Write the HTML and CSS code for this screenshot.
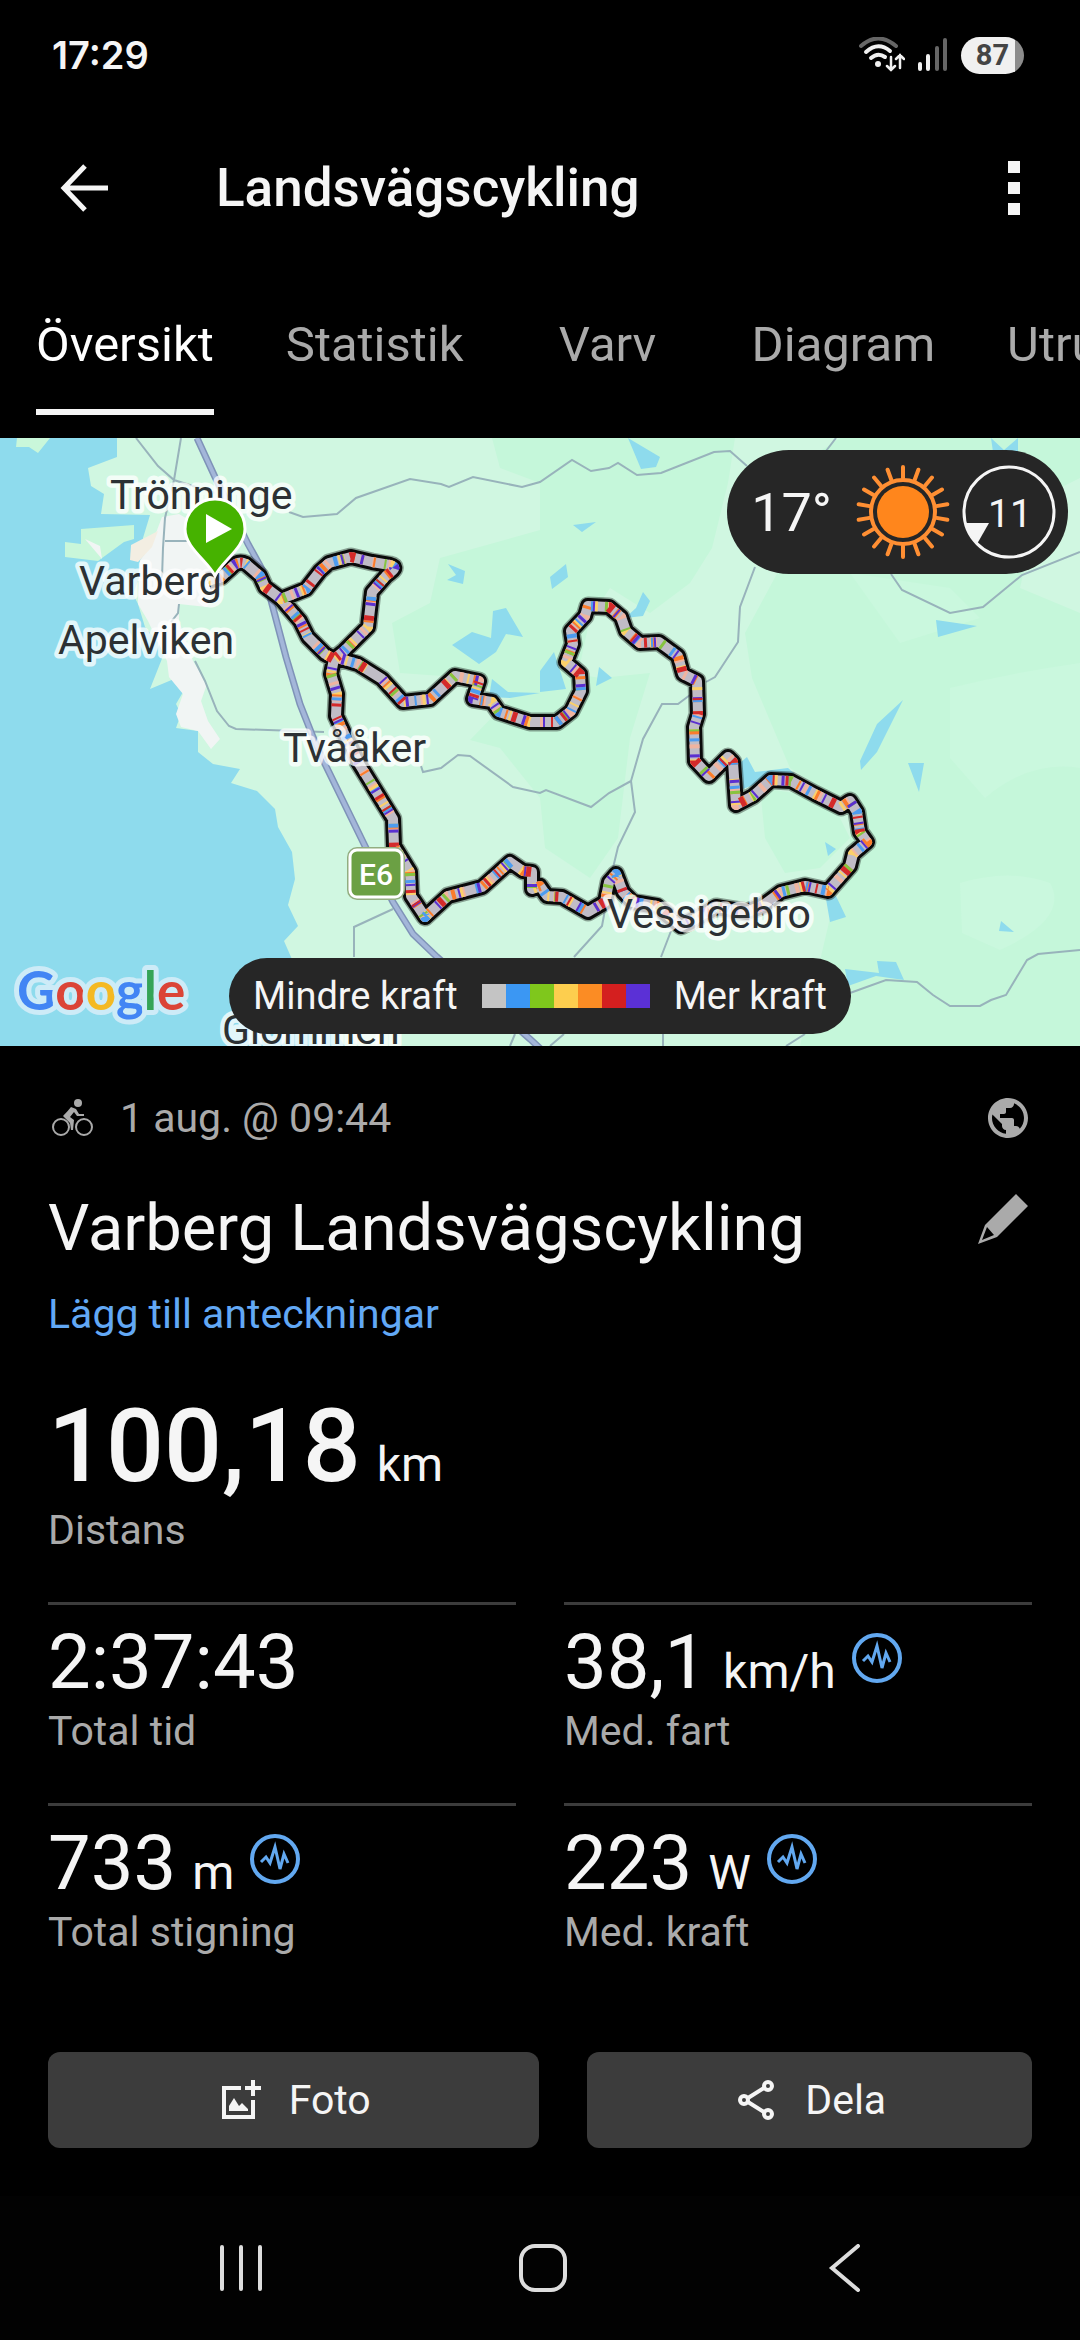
FILE: index.html
```html
<!DOCTYPE html>
<html lang="sv">
<head>
    <meta charset="UTF-8">
    <meta name="viewport" content="width=device-width, initial-scale=1.0">
    <title>Landsvägscykling</title>
    <link rel="stylesheet" href="styles.css">
</head>
<body>

<!-- Statusrad -->
<div class="status-bar">
    <span class="clock">17:29</span>
    <div class="status-icons">
        <svg class="wifi" viewBox="0 0 46 36" fill="none" stroke="#f0f0f0" stroke-linecap="round">
            <path d="M2 9Q19 -6 37 9" stroke="#666" stroke-width="4"/>
            <path d="M7 15Q19 4 31 14M12 21Q19 15 26 20" stroke-width="4"/>
            <circle cx="19" cy="27" r="3" fill="#f0f0f0" stroke="none"/>
            <path d="M32 20V33M28 29L32 33L36 29M41 31V18M37 22L41 18L45 22" stroke-width="2.5"/>
        </svg>
        <svg class="signal" viewBox="0 0 32 34" stroke-width="4" stroke-linecap="round">
            <path d="M3 26V31M11 18V31" stroke="#f0f0f0"/>
            <path d="M20 10V31M28 2V31" stroke="#666"/>
        </svg>
        <span class="battery">87</span>
    </div>
</div>

<!-- Sidhuvud -->
<header class="app-bar">
    <button class="icon-button" aria-label="Tillbaka">
        <svg width="48" height="48" viewBox="0 0 48 48" fill="none" stroke="#f5f5f5" stroke-width="5">
            <path d="M25 2L4 24L25 46M4 24H48"/>
        </svg>
    </button>
    <h1>Landsvägscykling</h1>
    <button class="icon-button" aria-label="Mer">
        <svg width="12" height="54" viewBox="0 0 12 54" fill="#f5f5f5">
            <path d="M0 0H12V12H0ZM0 21H12V33H0ZM0 42H12V54H0Z"/>
        </svg>
    </button>
</header>

<nav class="tabs">
    <a href="#oversikt" class="active"><span>Översikt</span></a>
    <a href="#statistik"><span>Statistik</span></a>
    <a href="#varv"><span>Varv</span></a>
    <a href="#diagram"><span>Diagram</span></a>
    <a href="#utrustning"><span>Utrustning</span></a>
</nav>

<!-- Karta -->
<div class="map">
    <svg class="map-svg" viewBox="0 0 1080 608">
        <defs>
            <path id="route" d="M208 143L221 139L231 130Q238 122 246 126L260 138L265 149L281 161L306 151L320 133L329 125L351 119L372 124L390 127Q398 129 391 134L386 138L372 154L368 189L344 213L334 221
                M281 161L300 183L308 199L325 216L334 221L331 236L337 256L336 278L343 293L358 324L393 381L394 408L410 434L411 458L425 479L448 458L482 449L510 424L523 433L532 434L532 451L540 448L547 458L562 459L588 474L605 464L609 444L616 436L623 454L633 464L657 468L681 488L695 481L716 469L747 474L762 468L781 454L805 448L828 453L850 428L853 416L867 404L860 394L857 374L850 363L841 369L815 356L791 343L771 342L753 358L736 367L733 324L728 319L709 338L695 323L694 289L698 276L697 243L683 236L678 218L659 204L640 205L626 193L621 179L609 169L588 168L585 178L571 193L573 206L566 224L580 236L581 253L571 273L557 284L530 284L499 274L492 264L473 261L479 243L455 238L430 261L403 264L382 241L358 226L334 219"/>
        </defs>

        <rect width="1080" height="608" fill="#d0f7e1"/>

        <!-- Skog -->
        <g fill="#c5f7da">
            <path d="M492 0H735L728 45L712 110L690 145L650 175L610 150L590 180L575 250L560 300L530 270L470 240L400 235L392 185L430 165L440 120L540 92V45L500 30Z"/>
            <path d="M780 130L745 195L752 240L790 330L850 370V430L830 480L800 608H1080V175L1020 150L1040 60L1080 40V0H840L780 40Z"/>
            <path d="M540 230L600 240L650 235L630 300L618 400L590 440L545 410L540 360L500 310L470 302Z"/>
            <path d="M760 350L830 360L850 400L820 430L785 435L765 400Z"/>
        </g>
        <g fill="#caf8de">
            <path d="M850 135L950 150L980 180L900 205ZM950 250Q1010 235 1080 225V330Q1030 322 985 360L950 320ZM960 445Q1010 430 1050 445Q1070 480 1000 512L962 495Z"/>
        </g>

        <!-- Hav -->
        <path fill="#8edbed" d="M0 0H117V19L88 30L91 48L104 56L101 76L150 77L143 100L145 124L133 156L138 166L145 189L165 213L150 251L174 241L183 254L176 266L181 276L176 290L198 293V314L213 326L240 331L231 345L257 353L275 371L278 389L292 414L295 441L288 467L298 488L284 503L291 519L310 560L345 608H0Z"/>
        <path fill="#c9f7da" d="M17 0H50L38 15L29 9L16 9ZM81 91L134 87V101L124 104L98 123L65 119V104L81 106Z"/>
        <path fill="#f1f5f4" d="M85 101L100 108L102 121Z"/>

        <!-- Tätort -->
        <path fill="#f1f5f4" d="M162 79L179 76L213 96L227 129L207 169L179 166V183L193 223L207 246L201 263L208 283L220 301L211 311L198 293L181 289L176 276L183 256L169 239L167 223L148 183L138 166V156L140 122L151 108Z"/>
        <path fill="#f3eee2" d="M131 107L158 93L152 109L138 124L130 122Z"/>

        <!-- Sjöar -->
        <g fill="#8edbed">
            <path d="M448 126L465 133L463 146L447 142L456 137ZM452 207L472 194L491 200L493 173L506 170L523 199L506 196L496 214L479 226ZM492 241L508 254L540 255L510 260L489 259Z"/>
            <path d="M540 233L554 214L566 251L540 254ZM599 229L612 240L596 248ZM628 0L660 19L656 29L641 31ZM573 87L596 84L582 94ZM566 126L568 139L552 151L550 139ZM643 154L650 163L643 178L625 180L636 170Z"/>
            <path d="M991 0L1004 12L1018 0V14H993ZM936 182L977 188L938 199ZM903 262L877 314L861 332L860 323L877 286ZM908 325H924L919 354ZM747 319L755 334L788 330L795 336L764 343L743 351L741 324Z"/>
            <path d="M825 404L836 411L828 418ZM826 461L836 458L846 479L830 484ZM1001 483L1014 494L999 493ZM845 531L879 535L877 523L896 524L904 542L876 538L848 548Z"/>
        </g>

        <!-- Vägar -->
        <g class="road">
            <path d="M136 0L158 28L174 42L215 55M181 0L174 42L165 80L163 110L162 140M165 103H190M179 166L178 175L171 184M195 223L205 243L217 273L229 288L236 291L324 294M289 74L303 79L337 76L356 60L410 41L441 46L449 49L473 39L522 49L540 44L572 22L591 33L609 30L618 25L637 37L661 35L714 14L730 13L747 28"/>
            <path d="M836 0L826 13M755 129L740 169L738 204L715 239L706 244M690 257L678 266H662L643 301L631 343L635 374L618 409L612 434L602 488L574 519M564 596L550 608M631 343L609 355L591 369L546 352L540 355L513 349L470 318L458 317L441 330L423 334L421 328M671 493L661 519M663 596V608"/>
            <path d="M891 136L902 152L950 175L983 169L1022 137L1080 114M850 555L886 542L917 544L933 557L950 568H980L991 562L1006 557L1027 522L1038 516L1080 512M805 596L786 608M393 471L354 489V519M515 596L510 608"/>
        </g>
        <path class="motorway-edge" d="M197 0L215 39L248 106L263 133L272 166L286 219L300 266L313 299L324 324L365 408L393 464L413 496L437 519L530 601L545 615"/>
        <path class="motorway" d="M197 0L215 39L248 106L263 133L272 166L286 219L300 266L313 299L324 324L365 408L393 464L413 496L437 519L530 601L545 615"/>

        <!-- Rutt, färgad efter kraft -->
        <g class="route">
            <use href="#route" class="route-shadow"/>
            <use href="#route" class="route-edge"/>
            <use href="#route" class="route-base"/>
            <use href="#route" class="route-light"/>
            <use href="#route" class="route-yellow"/>
            <use href="#route" class="route-orange"/>
            <use href="#route" class="route-green"/>
            <use href="#route" class="route-blue"/>
            <use href="#route" class="route-purple"/>
            <use href="#route" class="route-red"/>
        </g>

        <g class="place">
            <text x="110" y="71">Trönninge</text>
            <text x="79" y="157">Varberg</text>
            <text x="58" y="216">Apelviken</text>
            <text x="283" y="324">Tvååker</text>
            <text x="607" y="490">Vessigebro</text>
            <text x="222" y="606">Glommen</text>
        </g>

        <g>
            <rect x="347" y="409" width="58" height="53" rx="10" fill="#93ad80"/>
            <rect x="350" y="412" width="52" height="47" rx="7" fill="#6ba044" stroke="#fff" stroke-width="3"/>
            <text class="shield" x="376" y="447" text-anchor="middle">E6</text>
        </g>

        <path d="M215 138C209 124 185 110 185 91A30 30 0 0 1 245 91C245 110 221 124 215 138Z" fill="#46b200" stroke="#fff" stroke-width="3"/>
        <path d="M206 76L232 91L206 105Z" fill="#fff"/>

        <text class="google" x="17" y="572"><tspan fill="#4285f4">G</tspan><tspan fill="#db4437">o</tspan><tspan fill="#f4b923">o</tspan><tspan fill="#4285f4">g</tspan><tspan fill="#35a456">l</tspan><tspan fill="#db4437">e</tspan></text>
    </svg>

    <div class="weather">
        <span class="temp">17°</span>
        <svg width="94" height="94" viewBox="-47 -47 94 94">
            <circle r="26" fill="#ff861c"/>
            <circle r="32" fill="none" stroke="#ff8f33" stroke-width="4"/>
            <g stroke="#ff8f33" stroke-width="4" stroke-linecap="round">
                <path id="rays" d="M0 -34V-45M0 34V45"/>
                <use href="#rays" transform="rotate(20)"/>
                <use href="#rays" transform="rotate(40)"/>
                <use href="#rays" transform="rotate(60)"/>
                <use href="#rays" transform="rotate(80)"/>
                <use href="#rays" transform="rotate(100)"/>
                <use href="#rays" transform="rotate(120)"/>
                <use href="#rays" transform="rotate(140)"/>
                <use href="#rays" transform="rotate(160)"/>
            </g>
        </svg>
        <svg width="94" height="94" viewBox="0 0 94 94">
            <circle cx="47" cy="47" r="45" fill="none" stroke="#f5f5f5" stroke-width="3"/>
            <path d="M3 58H27L15 79Q6 70 3 58Z" fill="#f5f5f5"/>
            <text class="wind" x="48" y="62" text-anchor="middle">11</text>
        </svg>
    </div>

    <div class="legend">
        <span>Mindre kraft</span>
        <div class="scale">
            <i class="gray"></i><i class="blue"></i><i class="green"></i><i class="yellow"></i><i class="orange"></i><i class="red"></i><i class="purple"></i>
        </div>
        <span>Mer kraft</span>
    </div>
</div>

<!-- Aktivitet -->
<main class="details">
    <div class="date-row">
        <svg width="48" height="38" viewBox="-3 0 48 38" fill="#aaa">
            <circle cx="10" cy="28" r="8" fill="none" stroke="#aaa" stroke-width="2"/>
            <circle cx="33" cy="28" r="8" fill="none" stroke="#aaa" stroke-width="2"/>
            <circle cx="27" cy="4" r="4"/>
            <path d="M20 8L25 10L28 15H33V17H26L23 13L19 18L23 21L22 31H20L19 24L12 17Q17 12 20 8Z"/>
        </svg>
        <span>1 aug. @ 09:44</span>
        <svg class="globe" width="48" height="48" viewBox="0 0 24 24" fill="#aaa">
            <path d="M12 2C6.480 2 2 6.480 2 12s4.480 10 10 10 10-4.480 10-10S17.520 2 12 2zm-1 17.930c-3.950-.49-7-3.850-7-7.930 0-.62.08-1.210.21-1.790L9 15v1c0 1.100.9 2 2 2v1.930zm6.900-2.540c-.26-.81-1-1.390-1.900-1.390h-1v-3c0-.55-.45-1-1-1H8v-2h2c.55 0 1-.45 1-1V7h2c1.100 0 2-.9 2-2v-.41c2.930 1.190 5 4.060 5 7.410 0 2.080-.8 3.970-2.100 5.390z"/>
        </svg>
    </div>

    <div class="title-row">
        <h2>Varberg Landsvägscykling</h2>
        <button class="icon-button" aria-label="Redigera namn">
            <svg width="50" height="50" viewBox="0 0 50 50" fill="#aaa">
                <path fill-rule="evenodd" d="M38 0L50 12L19 43L0 50L7 31ZM9 33L4 46L16 41Z"/>
            </svg>
        </button>
    </div>

    <a class="notes" href="#anteckningar">Lägg till anteckningar</a>

    <div class="distance">
        <div class="value big">100,18 <small>km</small></div>
        <div class="label">Distans</div>
    </div>

    <div class="stats">
        <div class="stat">
            <div class="value">2:37:43</div>
            <div class="label">Total tid</div>
        </div>
        <div class="stat">
            <div class="value">38,1 <small>km/h</small>
                <svg class="wave" viewBox="0 0 50 50"><circle cx="25" cy="25" r="23"/><path d="M11 28L16 23L20 29L25 13L30 35L34 20L38 29"/></svg>
            </div>
            <div class="label">Med. fart</div>
        </div>
        <div class="stat">
            <div class="value">733 <small>m</small>
                <svg class="wave" viewBox="0 0 50 50"><circle cx="25" cy="25" r="23"/><path d="M11 28L16 23L20 29L25 13L30 35L34 20L38 29"/></svg>
            </div>
            <div class="label">Total stigning</div>
        </div>
        <div class="stat">
            <div class="value">223 <small>W</small>
                <svg class="wave" viewBox="0 0 50 50"><circle cx="25" cy="25" r="23"/><path d="M11 28L16 23L20 29L25 13L30 35L34 20L38 29"/></svg>
            </div>
            <div class="label">Med. kraft</div>
        </div>
    </div>

    <div class="actions">
        <button class="btn btn-photo">
            <svg width="48" height="48" viewBox="0 0 48 48" fill="#f5f5f5">
                <path d="M24 10V14H9V39H34V24H38V43H5V10ZM34 4H38V10H44V14H38V20H34V14H28V10H34ZM12 35V30L17 22L22 30L25 27L31 33V35Z"/>
            </svg>
            Foto
        </button>
        <button class="btn btn-share">
            <svg width="48" height="48" viewBox="0 0 48 48" fill="none" stroke="#f5f5f5" stroke-width="4">
                <circle cx="11" cy="24" r="4"/>
                <circle cx="35" cy="10" r="4"/>
                <circle cx="35" cy="38" r="4"/>
                <path d="M15 22L31 12M15 26L31 36"/>
            </svg>
            Dela
        </button>
    </div>
</main>

<!-- Systemknappar -->
<footer class="nav-bar">
    <button class="icon-button" aria-label="Senaste appar">
        <svg width="48" height="48" viewBox="0 0 48 48" stroke="#ddd" stroke-width="4" stroke-linecap="round"><path d="M5 3V45M24 3V45M43 3V45"/></svg>
    </button>
    <button class="icon-button" aria-label="Hem">
        <svg width="48" height="48" viewBox="0 0 48 48" fill="none" stroke="#ddd" stroke-width="4"><rect x="2" y="2" width="44" height="44" rx="14"/></svg>
    </button>
    <button class="icon-button" aria-label="Bakåt">
        <svg width="48" height="48" viewBox="0 0 48 48" fill="none" stroke="#ddd" stroke-width="4" stroke-linecap="round"><path d="M37 2L11 24L37 46"/></svg>
    </button>
</footer>

</body>
</html>
```
FILE: styles.css
```css
* {
    box-sizing: border-box;
}
body {
    font-family: Roboto, sans-serif;
    background-color: #000;
    color: #f5f5f5;
    margin: 0;
    min-height: 100vh;
    display: flex;
    flex-direction: column;
    overflow-x: hidden;
}
svg {
    display: block;
    flex-shrink: 0;
}
h1, h2 {
    margin: 0;
}
button {
    font-family: inherit;
    color: inherit;
    border: none;
    cursor: pointer;
}
.icon-button {
    background: none;
    padding: 0;
}

/* Statusrad */
.status-bar {
    display: flex;
    justify-content: space-between;
    align-items: center;
    height: 110px;
    padding: 0 56px 0 52px;
}
.clock {
    font-family: Inter, sans-serif;
    font-size: 38px;
    font-weight: 600;
}
.status-icons {
    display: flex;
    align-items: center;
    gap: 12px;
}
.wifi {
    width: 46px;
    height: 36px;
}
.signal {
    width: 32px;
    height: 34px;
}
.battery {
    width: 63px;
    border-radius: 20px;
    background: linear-gradient(to right, #f0f0f0 86%, #8c8c8c 86%);
    color: #444;
    font-size: 29px;
    font-weight: 700;
    line-height: 37px;
    text-align: center;
}

/* Sidhuvud */
.app-bar {
    display: flex;
    align-items: center;
    height: 156px;
    padding: 0 60px;
}
.app-bar h1 {
    flex: 1;
    margin-left: 108px;
    font-size: 53px;
    font-weight: 500;
}

/* Flikar */
.tabs {
    display: flex;
    padding: 51px 0 23px;
    overflow: hidden;
}
.tabs a {
    flex-shrink: 0;
    min-width: 216px;
    padding: 0 36px;
    color: #aaa;
    font-size: 49px;
    line-height: 56px;
    text-align: center;
    text-decoration: none;
}
.tabs span {
    display: block;
    padding-bottom: 36px;
    border-bottom: 6px solid transparent;
}
.tabs .active {
    color: #fff;
}
.tabs .active span {
    border-color: #f5f5f5;
}

/* Karta */
.map {
    position: relative;
}
.map-svg {
    width: 100%;
    height: auto;
}
.road {
    fill: none;
    stroke: #98b3bb;
    stroke-width: 2;
}
.motorway, .motorway-edge {
    fill: none;
    stroke: #a3b6d9;
    stroke-width: 4;
}
.motorway-edge {
    stroke: #7f93b8;
    stroke-width: 7;
}
.route {
    fill: none;
    stroke-width: 10;
    stroke-linejoin: round;
}
.route-shadow {
    stroke: rgba(0, 0, 0, 0.35);
    stroke-width: 19;
}
.route-edge {
    stroke: #0a0a0a;
    stroke-width: 16;
}
.route-base {
    stroke: #c0bcc6;
}
.route-light {
    stroke: #f0b4a0;
    stroke-dasharray: 0 9 3 13 4 19;
}
.route-yellow {
    stroke: #fbd06a;
    stroke-dasharray: 3 17 2 21 3 27;
}
.route-orange {
    stroke: #fb7c2c;
    stroke-dasharray: 0 12 3 19 2 27 4 17;
}
.route-green {
    stroke: #86c440;
    stroke-dasharray: 0 22 3 41 2 29 3 47;
}
.route-blue {
    stroke: #4d9cf0;
    stroke-dasharray: 0 20 3 21 2 14 4 37;
}
.route-purple {
    stroke: #5b30d0;
    stroke-dasharray: 0 11 2 18 3 31 2 12;
}
.route-red {
    stroke: #d42a2a;
    stroke-dasharray: 0 24 3 11 2 35 5 23;
}
.place {
    font-size: 41px;
    fill: #2c3134;
    stroke: rgba(255, 255, 255, 0.75);
    stroke-width: 9;
    stroke-linejoin: round;
    paint-order: stroke;
}
.shield {
    font-size: 30px;
    font-weight: 500;
    fill: #fff;
}
.google {
    font-family: Lato, sans-serif;
    font-size: 53px;
    font-weight: 700;
    stroke: #cdebf7;
    stroke-width: 10;
    stroke-linejoin: round;
    paint-order: stroke;
}
.weather {
    position: absolute;
    top: 12px;
    right: 12px;
    display: flex;
    align-items: center;
    gap: 12px;
    height: 124px;
    padding: 0 12px 0 24px;
    border-radius: 62px;
    background-color: #262626;
}
.temp {
    margin-right: 12px;
    font-size: 54px;
}
.wind {
    font-size: 39px;
    fill: #f5f5f5;
}
.legend {
    position: absolute;
    bottom: 12px;
    left: 50%;
    transform: translateX(-50%);
    display: flex;
    align-items: center;
    gap: 24px;
    height: 76px;
    padding: 0 24px;
    border-radius: 38px;
    background-color: #262626;
    font-size: 38px;
    white-space: nowrap;
}
.scale {
    display: flex;
}
.scale i {
    width: 24px;
    height: 24px;
}
.gray { background-color: #c4c4c4; }
.blue { background-color: #3b97f3; }
.green { background-color: #7fc71c; }
.yellow { background-color: #fdce4e; }
.orange { background-color: #fb8c24; }
.red { background-color: #d41f1f; }
.purple { background-color: #5b30d6; }

/* Aktivitet */
.details {
    flex: 1;
    padding: 48px 48px 46px;
}
.date-row {
    display: flex;
    align-items: center;
    gap: 24px;
    color: #aaa;
    font-size: 41px;
    line-height: 48px;
}
.globe {
    margin-left: auto;
}
.title-row {
    display: flex;
    justify-content: space-between;
    margin: 48px 0 24px;
    padding-right: 4px;
}
.title-row h2 {
    font-size: 65px;
    font-weight: 400;
    line-height: 76px;
}
.title-row button {
    align-self: flex-start;
    padding-top: 4px;
}
.notes {
    display: block;
    color: #62a8f5;
    font-size: 41px;
    line-height: 48px;
    text-decoration: none;
}
.distance {
    margin: 48px 0;
}
.value {
    display: flex;
    align-items: baseline;
    gap: 16px;
    font-size: 76px;
    line-height: 90px;
}
.value.big {
    font-size: 102px;
    font-weight: 500;
    line-height: 120px;
}
small {
    font-size: 48px;
    font-weight: 400;
    line-height: 1;
}
.label {
    color: #aaa;
    font-size: 41px;
    line-height: 48px;
}
.stats {
    display: grid;
    grid-template-columns: 1fr 1fr;
    gap: 48px;
}
.stat {
    padding-top: 12px;
    border-top: 3px solid #3c3c3c;
}
.wave {
    align-self: flex-start;
    width: 50px;
    height: 50px;
    margin-top: 16px;
    fill: none;
    stroke: #62a8f0;
    stroke-width: 4;
}
.wave path {
    stroke-width: 3;
}
.actions {
    display: flex;
    gap: 48px;
    margin-top: 96px;
}
.btn {
    display: flex;
    justify-content: center;
    align-items: center;
    gap: 24px;
    height: 96px;
    border-radius: 12px;
    background-color: #3c3c3c;
    font-size: 41px;
}
.btn-photo {
    flex: 41;
}
.btn-share {
    flex: 37;
}

/* Systemknappar */
.nav-bar {
    display: grid;
    grid-template-columns: repeat(3, 1fr);
    justify-items: center;
    align-items: center;
    height: 144px;
    padding: 0 84px 0 90px;
    background-color: #020202;
}
```
